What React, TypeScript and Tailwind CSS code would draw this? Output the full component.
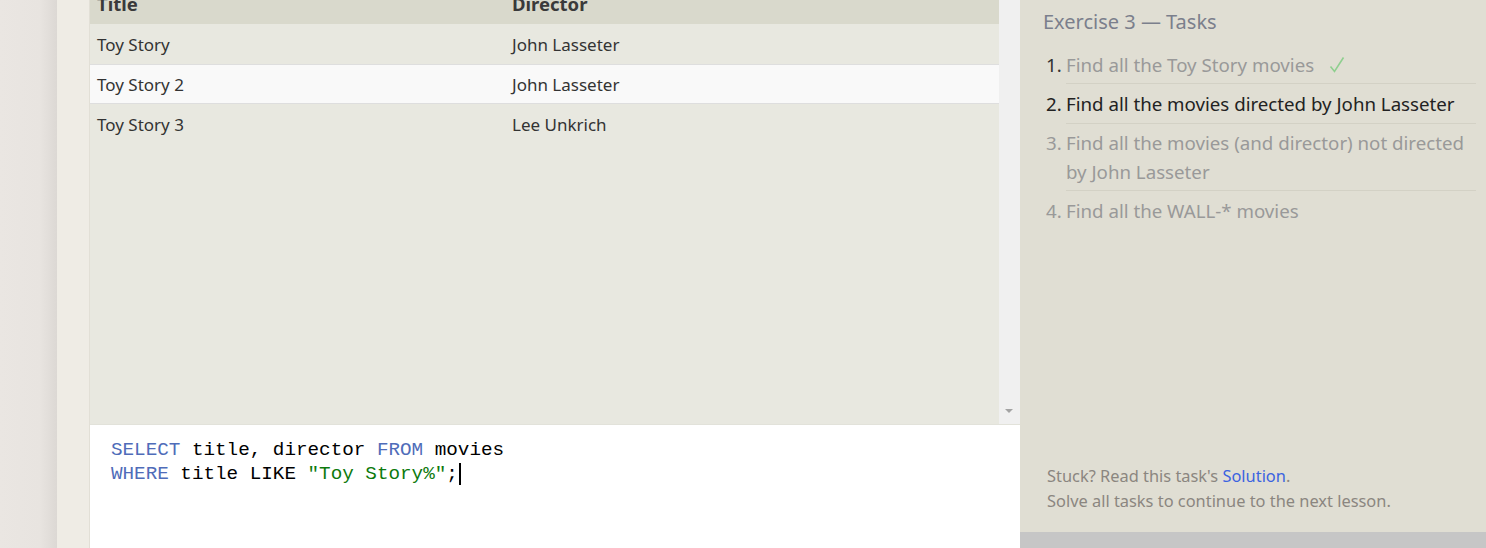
import React from "react";

const rows = [
  { title: "Toy Story", director: "John Lasseter", alt: false },
  { title: "Toy Story 2", director: "John Lasseter", alt: true },
  { title: "Toy Story 3", director: "Lee Unkrich", alt: false },
];

export default function App() {
  return (
    <div className="flex h-[548px] w-[1486px] overflow-hidden font-['Noto_Sans',sans-serif]">
      {/* left page background with shadow */}
      <div className="h-full w-[57px] bg-[linear-gradient(to_right,#eae6e2_0px,#e8e4e0_40px,#dcd8d4_57px)]" />
      {/* cream gutter */}
      <div className="h-full w-[33px] border-r border-[#e2dfd6] bg-[#efece5]" />
      {/* main column */}
      <div className="flex h-full w-[930px] flex-col">
        <div className="flex h-[425px] border-b border-[#e2e2da]">
          <div className="flex w-[909px] flex-col overflow-hidden bg-[#e8e8e0] text-[17px] text-[#333]">
            <div className="-mt-[16px] flex h-[40px] shrink-0 items-center bg-[#d9d9cc] text-[18.5px] font-bold text-[#3a3a3a]">
              <div className="w-[415px] px-[7px]">Title</div>
              <div className="px-[7px]">Director</div>
            </div>
            {rows.map((r, i) => (
              <div
                key={i}
                className={
                  r.alt
                    ? "flex h-[40px] shrink-0 items-center border-y border-[#dedede] bg-[#f9f9f9] pt-[2px]"
                    : "flex h-[40px] shrink-0 items-center pt-[2px]"
                }
              >
                <div className="w-[415px] px-[7px]">{r.title}</div>
                <div className="px-[7px]">{r.director}</div>
              </div>
            ))}
          </div>
          <div className="flex w-[21px] flex-col justify-end bg-[#f0f0f0] pb-[10px]">
            <svg width="21" height="5" viewBox="0 0 21 5">
              <polygon points="6,0 14,0 10,4" fill="#a3a3a3" />
            </svg>
          </div>
        </div>
        <div className="flex-1 bg-white pl-[21px] pt-[13px] font-['Liberation_Mono',monospace] text-[19.27px] leading-[24px] text-black">
          <div>
            <span className="text-[#4f6cb9]">SELECT</span> title, director{" "}
            <span className="text-[#4f6cb9]">FROM</span> movies
          </div>
          <div className="flex items-center">
            <span>
              <span className="text-[#4f6cb9]">WHERE</span> title LIKE{" "}
              <span className="text-[#0d7a0d]">"Toy Story%"</span>;
            </span>
            <span className="ml-[1px] inline-block h-[22px] w-[2px] bg-black" />
          </div>
        </div>
      </div>
      {/* right panel */}
      <div className="flex h-full w-[466px] flex-col bg-[#e0ded3]">
        <div className="flex flex-1 flex-col pl-[23px] pr-[10px]">
          <div className="mt-[7px] text-[20px] leading-[30px] text-[#7b7f8c]">Exercise 3 — Tasks</div>
          <ol className="mt-[13px] text-[18.7px] leading-[29px]">
            <li className="flex">
              <span className="w-[23px] shrink-0 pl-[3px] text-[#333]">1.</span>
              <div className="flex flex-1 items-center border-b border-[#d3d1c5] pb-[4px] text-[#999]">
                Find all the Toy Story movies
                <svg className="ml-[15px]" width="16" height="18" viewBox="0 0 16 18">
                  <path d="M1.5 10.5 L5.5 15.5 L14.5 1.5" fill="none" stroke="#8fcf8f" strokeWidth="1.6" />
                </svg>
              </div>
            </li>
            <li className="flex">
              <span className="w-[23px] shrink-0 pl-[3px] pt-[5px] text-[#222]">2.</span>
              <div className="flex-1 border-b border-[#d3d1c5] py-[5px] text-[#222]">
                Find all the movies directed by John Lasseter
              </div>
            </li>
            <li className="flex">
              <span className="w-[23px] shrink-0 pl-[3px] pt-[4px] text-[#999]">3.</span>
              <div className="flex-1 border-b border-[#d3d1c5] py-[4px] text-[#999]">
                Find all the movies (and director) not directed by John Lasseter
              </div>
            </li>
            <li className="flex">
              <span className="w-[23px] shrink-0 pl-[3px] pt-[5px] text-[#999]">4.</span>
              <div className="flex-1 py-[5px] text-[#999]">Find all the WALL-* movies</div>
            </li>
          </ol>
          <div className="mt-auto mb-[19px] pl-[4px] text-[16.4px] leading-[25px] text-[#8b8680]">
            <div>
              Stuck? Read this task's <span className="text-[#3b63e0]">Solution</span>.
            </div>
            <div>Solve all tasks to continue to the next lesson.</div>
          </div>
        </div>
        <div className="h-[16px] bg-[#c6c6c6]" />
      </div>
    </div>
  );
}
